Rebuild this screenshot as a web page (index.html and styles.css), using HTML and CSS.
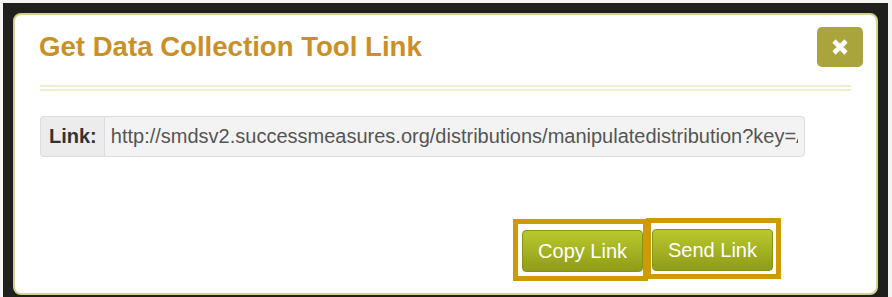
FILE: index.html
```html
<!DOCTYPE html>
<html lang="en">
<head>
  <meta charset="UTF-8" />
  <title>Get Data Collection Tool Link</title>
  <link rel="stylesheet" href="styles.css">
</head>
<body>
  <div class="backdrop">
    <div class="modal">
      <div class="modal-header">
        <h4 class="modal-title">Get Data Collection Tool Link</h4>
        <button class="close" title="Close">
          <svg width="16" height="16" viewBox="0 0 16 16"><path d="M2 2 L14 14 M14 2 L2 14" stroke="#fff" stroke-width="4.6" /></svg>
        </button>
      </div>
      <div class="divider"></div>

      <div class="input-group">
        <span class="addon">Link:</span>
        <input type="text" class="link-field" readonly value="http://smdsv2.successmeasures.org/distributions/manipulatedistribution?key=A8F3C2D19E7B">
      </div>

      <div class="modal-footer">
        <span class="mark mark-copy"><button class="btn">Copy Link</button></span>
        <span class="mark mark-send"><button class="btn">Send Link</button></span>
      </div>
    </div>
  </div>
</body>
</html>
```

FILE: styles.css
```css
body { margin: 0; background: #f4f4f4; font-family: "Liberation Sans", Arial, sans-serif; overflow: hidden; }
.backdrop { margin: 3px 4px 0 3px; padding: 10px 10px 0 10px; background: #1f1f1d; height: 284px; }
.modal { background: #fff; border: 2px solid #d4d190; border-radius: 8px; height: 278px; }

.modal-header { display: flex; justify-content: space-between; align-items: flex-start; padding: 12px 13px 0 24px; }
.modal-title { margin: 4px 0 0; font-size: 27.6px; line-height: 31px; font-weight: bold; color: #c99029; }
.close { width: 46px; height: 40px; background: #a9a53c; border: none; border-radius: 5px; display: flex; align-items: center; justify-content: center; padding: 0; cursor: pointer; }

.divider { margin: 18px 25px 0; height: 2px; border-top: 2px solid #efedd2; border-bottom: 2px solid #efedd2; }

.input-group { display: flex; width: 765px; height: 41px; margin: 25px 0 0 25px; }
.addon { display: flex; align-items: center; padding: 0 7px 0 8px; background: #ececec; border: 1px solid #dcdcdc; border-right: none; border-radius: 4px 0 0 4px; font-size: 20px; font-weight: bold; color: #333; }
.link-field { flex: 1; min-width: 0; padding: 0 6px; background: #f3f3f3; border: 1px solid #dcdcdc; border-radius: 0 4px 4px 0; font-family: inherit; font-size: 20px; color: #555; outline: none; }

.modal-footer { display: flex; justify-content: flex-end; align-items: flex-start; padding-right: 95px; margin-top: 61px; }
.mark { display: block; border: 5px solid #cf9a06; }
.mark-copy { margin-top: 1px; padding: 6px 0 4px 4px; position: relative; z-index: 1; }
.mark-send { margin-left: -2px; padding: 6px 3px 3px 1px; }
.btn { display: block; height: 42px; padding: 0 15px; font-family: inherit; font-size: 20px; color: #fff; background: linear-gradient(#bac82e, #8e9c18); border: 1px solid #869414; border-radius: 4px; cursor: pointer; }
```
